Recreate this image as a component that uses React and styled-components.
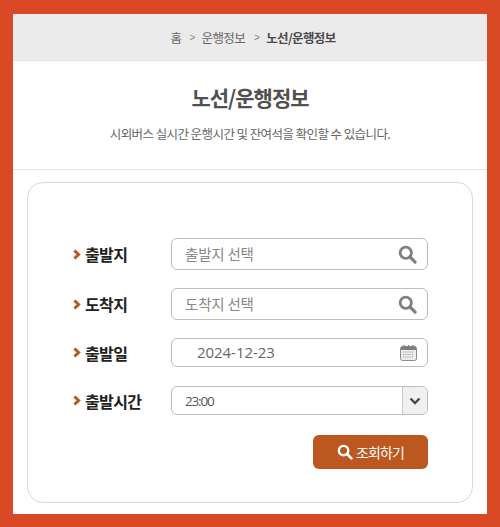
import styled, { createGlobalStyle } from "styled-components";

const GlobalStyle = createGlobalStyle`
  html, body { margin: 0; padding: 0; background: #fff; }
  body { font-family: "Noto Sans CJK KR", "Noto Sans", sans-serif; }
  * { box-sizing: border-box; }
`

const Frame = styled.div`
  width: 500px;
  height: 527px;
  border: solid #D94925;
  border-width: 14px 13px 13px 13px;
  background: #fff;
  display: flex;
  flex-direction: column;
`
const Breadcrumb = styled.nav`
  height: 47px;
  flex: none;
  background: #EBEBEB;
  border-bottom: 1px solid #E2E2E2;
  display: flex;
  align-items: center;
  justify-content: center;
  font-size: 12.5px;
  letter-spacing: -0.65px;
  color: #666;
  padding-left: 6px;
`
const Sep = styled.span`
  font-family: "Liberation Sans", sans-serif;
  font-size: 10px;
  color: #888;
  margin: 0 ${(p) => p.$right}px 0 ${(p) => p.$left}px;
`
const Current = styled.b`
  font-weight: 700;
  color: #4A4A4A;
`
const Head = styled.header`
  height: 109px;
  flex: none;
  border-bottom: 1px solid #E6E6E6;
  display: flex;
  flex-direction: column;
  align-items: center;
  padding-top: 20px;
`
const Title = styled.h1`
  margin: 0;
  font-size: 21px;
  line-height: 32px;
  font-weight: 700;
  letter-spacing: -1px;
  color: #505050;
`
const Sub = styled.p`
  margin: 11px 0 0;
  font-size: 12.5px;
  line-height: 20px;
  font-weight: 400;
  letter-spacing: -0.58px;
  color: #666;
`
const Card = styled.section`
  width: 446px;
  height: 321px;
  margin: 12px 0 0 14px;
  border: 1px solid #D9D9D9;
  border-radius: 16px;
  padding: 55px 44px 0 45px;
  display: flex;
  flex-direction: column;
`
const Row = styled.div`
  display: flex;
  align-items: center;
  height: ${(p) => p.$h}px;
  margin-bottom: ${(p) => p.$gap}px;
`
const Label = styled.label`
  width: 98px;
  flex: none;
  display: flex;
  align-items: center;
  gap: 4px;
  font-size: 16px;
  font-weight: 700;
  letter-spacing: -0.6px;
  color: #222;
`
const Field = styled.div`
  width: 257px;
  height: 100%;
  border: 1px solid #BDBDBD;
  border-radius: 6px;
  background: #fff;
  display: flex;
  align-items: center;
  justify-content: space-between;
  overflow: hidden;
`
const Placeholder = styled.span`
  padding-left: 13px;
  padding-bottom: 2px;
  font-size: 14.5px;
  letter-spacing: -0.2px;
  color: #888;
`
const DateText = styled.span`
  padding-left: 25px;
  padding-bottom: 2px;
  font-family: "Open Sans", sans-serif;
  font-size: 15px;
  letter-spacing: -0.05px;
  color: #666;
`
const TimeText = styled.span`
  padding-left: 13px;
  font-family: "Open Sans", sans-serif;
  font-size: 13.5px;
  letter-spacing: -1.2px;
  color: #555;
`
const IconSlot = styled.span`
  display: flex;
  margin-right: ${(p) => p.$right}px;
`
const SelectArrow = styled.span`
  width: 25px;
  height: 100%;
  background: #F0F0F0;
  border-left: 1px solid #C9C9C9;
  display: flex;
  align-items: center;
  justify-content: center;
`
const ButtonRow = styled.div`
  display: flex;
  justify-content: flex-end;
  margin-top: 20px;
`
const SearchButton = styled.button`
  width: 115px;
  height: 34px;
  border: 0;
  border-radius: 6px;
  background: #BC5720;
  color: #fff;
  font-family: inherit;
  font-size: 14px;
  letter-spacing: -0.9px;
  display: flex;
  align-items: center;
  justify-content: center;
  gap: 3px;
  padding: 0;
`

const Chevron = () => (
  <svg width="8" height="11" viewBox="0 0 8 11">
    <path d="M1.4 1.5 L5.6 5.5 L1.4 9.5" fill="none" stroke="#B85A20" strokeWidth="3" />
  </svg>
)

const SearchIcon = ({ color, size }) => (
  <svg width={size} height={size} viewBox="0 0 20 20">
    <circle cx="8.2" cy="8.2" r="5.9" fill="none" stroke={color} strokeWidth="3" />
    <path d="M12.6 12.6 L18 18" stroke={color} strokeWidth="3.4" strokeLinecap="round" />
  </svg>
)

const CalendarIcon = () => (
  <svg width="17" height="16" viewBox="0 0 17 16">
    <rect x="0.5" y="1.5" width="16" height="14" rx="2" fill="#EDEDED" stroke="#8A8A8A" />
    <path d="M1 2.5 a1.5 1.5 0 0 1 1.5 -1 h12 a1.5 1.5 0 0 1 1.5 1 V5 H1 Z" fill="#7D7D7D" />
    <path d="M4 0 V3 M8.5 0 V3 M13 0 V3" stroke="#7D7D7D" strokeWidth="1.2" />
    <path d="M3 7 H14 M3 9.5 H14 M3 12 H14" stroke="#A0A0A0" strokeWidth="1" strokeDasharray="1.2 1" />
  </svg>
)

const ArrowDown = () => (
  <svg width="12" height="8" viewBox="0 0 12 8">
    <path d="M1.5 1.5 L6 6 L10.5 1.5" fill="none" stroke="#4A4A4A" strokeWidth="2.4" />
  </svg>
)

export default function App() {
  return (
    <>
      <GlobalStyle />
      <Frame>
        <Breadcrumb>
          <span>홈</span>
          <Sep $left={8} $right={7}>&gt;</Sep>
          <span>운행정보</span>
          <Sep $left={9} $right={7}>&gt;</Sep>
          <Current>노선/운행정보</Current>
        </Breadcrumb>
        <Head>
          <Title>노선/운행정보</Title>
          <Sub>시외버스 실시간 운행시간 및 잔여석을 확인할 수 있습니다.</Sub>
        </Head>
        <Card>
          <Row $h={32} $gap={18}>
            <Label><Chevron />출발지</Label>
            <Field>
              <Placeholder>출발지 선택</Placeholder>
              <IconSlot $right={10}><SearchIcon color="#808080" size={19} /></IconSlot>
            </Field>
          </Row>
          <Row $h={32} $gap={18}>
            <Label><Chevron />도착지</Label>
            <Field>
              <Placeholder>도착지 선택</Placeholder>
              <IconSlot $right={10}><SearchIcon color="#808080" size={19} /></IconSlot>
            </Field>
          </Row>
          <Row $h={29} $gap={19}>
            <Label><Chevron />출발일</Label>
            <Field>
              <DateText>2024-12-23</DateText>
              <IconSlot $right={10}><CalendarIcon /></IconSlot>
            </Field>
          </Row>
          <Row $h={29} $gap={0}>
            <Label><Chevron />출발시간</Label>
            <Field>
              <TimeText>23:00</TimeText>
              <SelectArrow><ArrowDown /></SelectArrow>
            </Field>
          </Row>
          <ButtonRow>
            <SearchButton><SearchIcon color="#fff" size={16} />조회하기</SearchButton>
          </ButtonRow>
        </Card>
      </Frame>
    </>
  )
}
